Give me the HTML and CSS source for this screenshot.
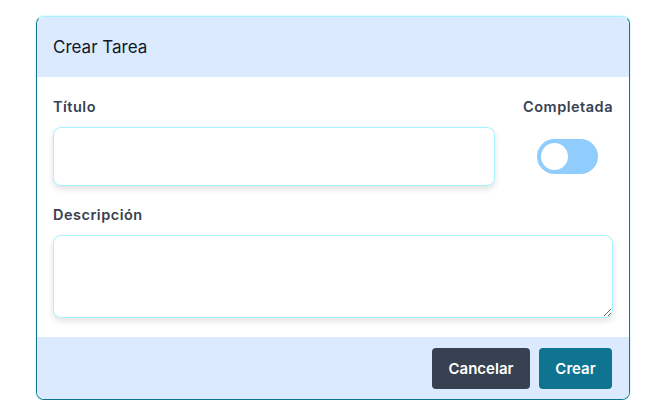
FILE: index.html
```html
<!DOCTYPE html>
<html lang="es">
<head>
<meta charset="utf-8">
<link rel="stylesheet" href="styles.css">
</head>
<body>
<div class="page">
  <div class="card">
    <div class="card-header">Crear Tarea</div>
    <div class="card-body">
      <div class="top-grid">
        <label class="label">Título</label>
        <label class="label label-right">Completada</label>
        <input class="input" type="text">
        <div class="toggle-cell">
          <span class="toggle"><span class="knob"></span></span>
        </div>
      </div>
      <label class="label desc-label">Descripción</label>
      <textarea class="textarea"></textarea>
    </div>
    <div class="card-footer">
      <button class="btn btn-dark">Cancelar</button>
      <button class="btn btn-teal">Crear</button>
    </div>
  </div>
</div>
</body>
</html>
```

FILE: styles.css
```css
* { box-sizing: border-box; }
html, body { margin: 0; padding: 0; background: #fff; }
body { font-family: Inter, "Noto Sans", sans-serif; color: #1f2937; }
.page { padding: 16px 36px 0 36px; }
.card {
  width: 594px;
  height: 384px;
  border: 1px solid #0e7490;
  border-top-color: #a5f3fc;
  border-radius: 8px;
  overflow: hidden;
  display: flex;
  flex-direction: column;
  box-shadow: 0 0 2px rgba(103, 232, 249, 0.7);
}
.card-header {
  background: #dbeafe;
  height: 60px;
  padding: 0 16px;
  display: flex;
  align-items: center;
  font-size: 17px;
  color: #111827;
  letter-spacing: 0;
}
.card-body {
  background: #fff;
  padding: 20px 16px 19px 16px;
  display: flex;
  flex-direction: column;
}
.top-grid {
  display: grid;
  grid-template-columns: 442px 1fr;
  column-gap: 28px;
  row-gap: 10px;
}
.label {
  font-size: 14.5px;
  font-weight: 600;
  color: #374151;
  line-height: 20px;
  height: 20px;
  letter-spacing: 0.5px;
}
.label-right { text-align: right; }
.input, .textarea {
  border: 1px solid #a5f3fc;
  border-radius: 8px;
  background: #fff;
  box-shadow: 0 3px 6px rgba(0, 0, 0, 0.12);
  outline: none;
  font-family: inherit;
  font-size: 14px;
}
.input { height: 59px; width: 100%; }
.toggle-cell {
  display: flex;
  align-items: center;
  justify-content: center;
  padding-right: 2px;
}
.toggle {
  width: 61px;
  height: 35px;
  border-radius: 18px;
  background: #90cdfd;
  display: flex;
  align-items: center;
  padding-left: 4px;
}
.knob {
  width: 27px;
  height: 27px;
  border-radius: 50%;
  background: #fff;
}
.desc-label { margin-top: 19px; margin-bottom: 10px; }
.textarea {
  width: 560px;
  height: 83px;
  resize: vertical;
  display: block;
}
.card-footer {
  background: #dbeafe;
  flex: 1;
  display: flex;
  justify-content: flex-end;
  align-items: center;
  gap: 9px;
  padding: 0 17px 0 16px;
}
.btn {
  height: 41px;
  border: none;
  border-radius: 4px;
  color: #fff;
  font-family: inherit;
  font-size: 15px;
  font-weight: 600;
  padding: 0 16px;
}
.btn-dark { background: #374151; width: 98px; }
.btn-teal { background: #0e7490; width: 73px; }
```
